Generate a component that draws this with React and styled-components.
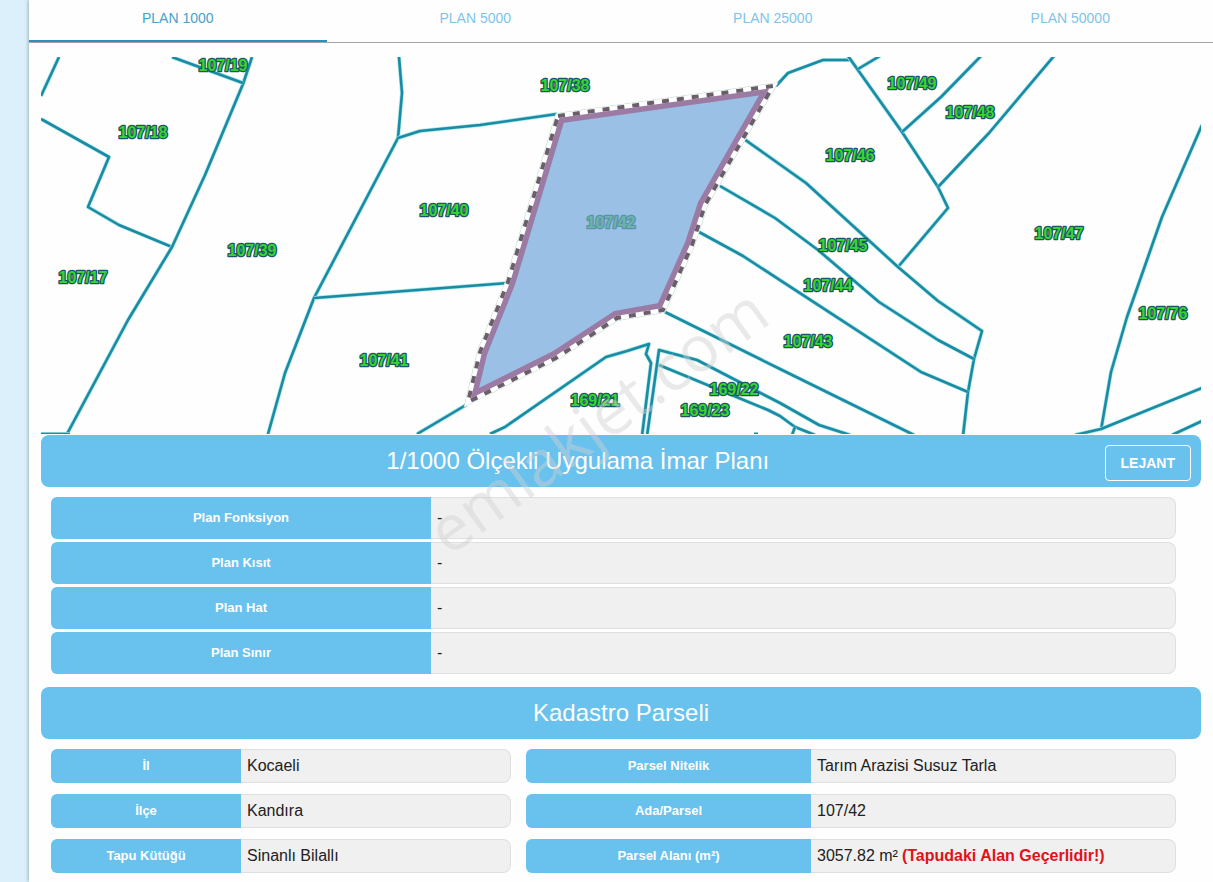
import React, { useState } from "react";
import styled, { createGlobalStyle } from "styled-components";

const tabs = ["PLAN 1000", "PLAN 5000", "PLAN 25000", "PLAN 50000"];

const planRows = [
  { label: "Plan Fonksiyon", value: "-" },
  { label: "Plan Kısıt", value: "-" },
  { label: "Plan Hat", value: "-" },
  { label: "Plan Sınır", value: "-" },
];

const locationRows = [
  { label: "İl", value: "Kocaeli" },
  { label: "İlçe", value: "Kandıra" },
  { label: "Tapu Kütüğü", value: "Sinanlı Bilallı" },
];

const parcelRows = [
  { label: "Parsel Nitelik", value: "Tarım Arazisi Susuz Tarla" },
  { label: "Ada/Parsel", value: "107/42" },
  {
    label: "Parsel Alanı (m²)",
    value: "3057.82 m²",
    warning: "(Tapudaki Alan Geçerlidir!)",
  },
];

const borders = [
  "59,57 41,96",
  "41,119 109,157 88,207 119,225 172,247",
  "252,57 243,84 205,175 172,247 128,320 67,434",
  "172,57 243,83",
  "399,57 402,93 398,138 314,298 285,373 268,434",
  "398,138 420,131 480,125 557,114",
  "314,298 508,283",
  "417,434 466,405",
  "490,434 505,427 606,357 627,351 649,344 646,354 651,363 642,436",
  "647,436 659,350 697,360 780,403 819,425 850,435",
  "659,365 768,410 780,416 795,427 815,435",
  "795,427 792,435",
  "754,434 758,434",
  "665,312 780,369 914,435",
  "776,86 788,73 823,60 850,60",
  "848,56 902,132 938,187 948,208 898,267",
  "858,69 880,56",
  "902,132 941,97 981,56",
  "938,187 989,133 1054,56",
  "744,139 806,183 898,267 938,301 982,331 974,359 968,392 963,436",
  "720,186 775,218 818,250 879,302 938,340 974,359",
  "699,232 743,256 921,372 968,392",
  "1202,125 1162,217 1127,317 1111,372 1101,430",
  "1075,435 1101,429 1202,388",
  "1172,435 1202,421",
  "41,434 70,434",
];

const mapLabels = [
  ["107/19", 223, 66],
  ["107/18", 143, 133],
  ["107/17", 83, 278],
  ["107/39", 252, 251],
  ["107/40", 444, 211],
  ["107/38", 565, 86],
  ["107/41", 384, 361],
  ["107/46", 850, 156],
  ["107/49", 912, 84],
  ["107/48", 970, 113],
  ["107/47", 1059, 234],
  ["107/45", 843, 246],
  ["107/44", 828, 286],
  ["107/43", 808, 342],
  ["107/76", 1163, 314],
  ["169/21", 595, 401],
  ["169/22", 734, 390],
  ["169/23", 705, 411],
];

const parcelEdge =
  "558,116 773,86 742,140 705,205 692,245 663,310 617,318 556,358 468,402 480,352 508,282";

const ParcelMap = () => (
  <MapDrawing viewBox="41 57 1160 377" role="img" aria-label="Parsel haritası">
    <clipPath id="parcel">
      <polygon points={parcelEdge} />
    </clipPath>
    {borders.map((points) => (
      <g key={points}>
        <polyline className="halo" points={points} />
        <polyline className="border" points={points} />
      </g>
    ))}
    <polygon className="edge-line" points={parcelEdge} />
    <polygon className="edge-base" points={parcelEdge} />
    {/* the clip keeps only the inner half of the purple stroke */}
    <polygon className="area" points={parcelEdge} clipPath="url(#parcel)" />
    <polygon className="edge-white" points={parcelEdge} />
    <polygon className="edge-dash" points={parcelEdge} />
    {mapLabels.map(([text, x, y]) => (
      <text key={text} x={x} y={y + 5}>
        {text}
      </text>
    ))}
    <text className="selected" x="611" y="228">
      107/42
    </text>
  </MapDrawing>
);

const InfoList = ({ rows, columns, size }) => (
  <List $size={size}>
    {rows.map(({ label, value, warning }) => (
      <Row key={label} $columns={columns} $size={size}>
        <Label>{label}</Label>
        <Value>
          {value} {warning && <Warning>{warning}</Warning>}
        </Value>
      </Row>
    ))}
  </List>
);

const App = () => {
  const [activeTab, setActiveTab] = useState(tabs[0]);

  return (
    <>
      <GlobalStyle />
      <Page>
        <Panel>
          <TabBar role="tablist">
            {tabs.map((tab) => (
              <Tab
                key={tab}
                role="tab"
                aria-selected={tab === activeTab}
                $active={tab === activeTab}
                onClick={() => setActiveTab(tab)}
              >
                {tab}
              </Tab>
            ))}
          </TabBar>
          <Content>
            <ParcelMap />
            <Banner>
              <h2>1/1000 Ölçekli Uygulama İmar Planı</h2>
              <LegendButton>LEJANT</LegendButton>
            </Banner>
            <Section>
              <InfoList rows={planRows} columns="380fr 745fr" size="large" />
            </Section>
            <Banner>
              <h2>Kadastro Parseli</h2>
            </Banner>
            <Section $split>
              <InfoList rows={locationRows} columns="190fr 270fr" />
              <InfoList rows={parcelRows} columns="285fr 365fr" />
            </Section>
            <Watermark>emlakjet.com</Watermark>
          </Content>
        </Panel>
      </Page>
    </>
  );
};

const GlobalStyle = createGlobalStyle`
  * {
    box-sizing: border-box;
  }
  body {
    margin: 0;
    background: #dbf0fa;
    color: #212121;
    font-family: "Liberation Sans", Arial, sans-serif;
    font-size: 16px;
  }
`;

const Page = styled.div`
  min-height: 100vh;
  display: flex;
  padding-left: 29px;
`;

const Panel = styled.main`
  flex: 1;
  min-width: 0;
  overflow: hidden;
  background: #fefefe;
  box-shadow: 0 0 4px rgba(0, 0, 0, 0.4);
`;

const TabBar = styled.div`
  display: grid;
  grid-template-columns: repeat(4, 1fr);
  margin-right: -6px;
  border-bottom: 1px solid #a3a3a3;
`;

const Tab = styled.button`
  height: 42px;
  padding: 0 0 4px;
  border: 0;
  border-bottom: 2px solid ${({ $active }) => ($active ? "#2f8fbb" : "transparent")};
  background: none;
  color: ${({ $active }) => ($active ? "#4a9fca" : "#7fc4e6")};
  font-family: inherit;
  font-size: 14px;
  cursor: pointer;
`;

const Content = styled.div`
  position: relative;
  padding: 14px 12px 9px;
`;

const MapDrawing = styled.svg`
  display: block;
  width: 100%;
  margin-bottom: 1px;

  polyline {
    fill: none;
    stroke-linejoin: round;
  }
  .halo {
    stroke: #a5e6e6;
    stroke-width: 4;
  }
  .border {
    stroke: #1b8ba5;
    stroke-width: 2.6;
  }
  .area {
    fill: #9bc0e5;
    stroke: #9b7ba4;
    stroke-width: 15;
  }
  .edge-line {
    fill: none;
    stroke: #b9d8d0;
    stroke-width: 6;
  }
  .edge-base,
  .edge-white {
    fill: none;
    stroke: #ffffff;
    stroke-width: 5;
  }
  .edge-white {
    stroke-width: 4;
  }
  .edge-dash {
    fill: none;
    stroke: #6b5d69;
    stroke-width: 4;
    stroke-dasharray: 7 8;
  }
  text {
    fill: #35d62f;
    stroke: #1d5468;
    stroke-width: 2.6;
    stroke-linejoin: round;
    paint-order: stroke;
    font-size: 16px;
    font-weight: 700;
    text-anchor: middle;
  }
  .selected {
    fill: #6bb5a8;
    stroke: #5c92ad;
  }
`;

const Banner = styled.div`
  display: flex;
  align-items: center;
  height: 52px;
  padding: 0 10px;
  border-radius: 8px;
  background: #69c2ee;
  color: #ffffff;

  h2 {
    flex: 1;
    margin: 0;
    font-size: 24px;
    font-weight: 400;
    text-align: center;
  }
`;

const LegendButton = styled.button`
  height: 36px;
  padding: 0 15px;
  border: 1px solid #ffffff;
  border-radius: 4px;
  margin-top: 4px;
  background: none;
  color: #ffffff;
  font-family: inherit;
  font-size: 14px;
  font-weight: 700;
  cursor: pointer;
`;

const Section = styled.section`
  display: grid;
  grid-template-columns: ${({ $split }) => ($split ? "460fr 650fr" : "1fr")};
  column-gap: 15px;
  padding: ${({ $split }) => ($split ? "10px 25px 0 10px" : "10px 25px 13px 10px")};
`;

const List = styled.dl`
  display: grid;
  align-content: start;
  gap: ${({ $size }) => ($size === "large" ? "3px" : "11px")};
  margin: 0;
`;

const Row = styled.div`
  display: grid;
  grid-template-columns: ${({ $columns }) => $columns};
  height: ${({ $size }) => ($size === "large" ? "42px" : "34px")};
`;

const Label = styled.dt`
  display: flex;
  align-items: center;
  justify-content: center;
  padding-bottom: 2px;
  border-radius: 6px 0 0 6px;
  background: #69c2ee;
  color: #ffffff;
  font-size: 13px;
  font-weight: 700;
`;

const Value = styled.dd`
  margin: 0;
  display: flex;
  align-items: center;
  gap: 4px;
  padding: 0 6px;
  border: 1px solid #dfdfdf;
  border-left: 0;
  border-radius: 0 8px 8px 0;
  background: #f0f0f0;
`;

const Warning = styled.strong`
  color: #e3101a;
`;

/* Runs diagonally over the map and the first table */
const Watermark = styled.div`
  position: absolute;
  top: 377px;
  left: 48%;
  color: rgba(208, 208, 208, 0.45);
  font-family: "Open Sans", sans-serif;
  font-size: 64px;
  line-height: 64px;
  transform: translate(-50%, -50%) rotate(-36deg);
  pointer-events: none;
`;

export default App;
